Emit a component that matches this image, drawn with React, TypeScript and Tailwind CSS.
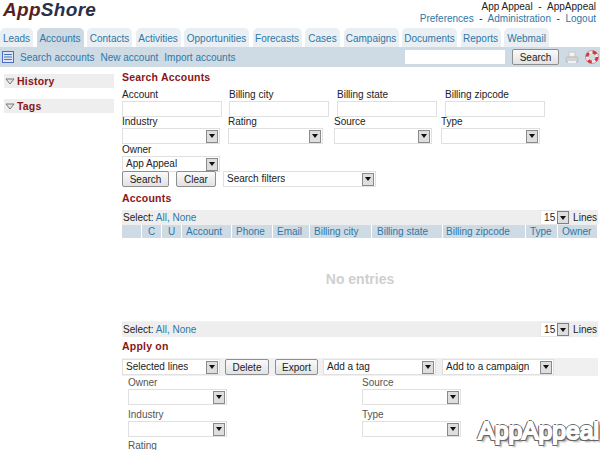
import React from "react";

function Sel({ w, text }: { w: string; text?: string }) {
  return (
    <div className={`${w} h-[16px] flex items-center justify-between bg-white border border-[#e0e0e0] pl-[3px] pr-[1px] shrink-0`}>
      <span className="truncate text-[#222] pb-[1px]">{text}</span>
      <span className="w-[12px] h-[13px] bg-[#dedede] border border-[#8a8a8a] flex items-center justify-center shrink-0">
        <svg width="6" height="4" viewBox="0 0 6 4"><path d="M0 0h6L3 4z" fill="#111" /></svg>
      </span>
    </div>
  );
}

function Btn({ w, children }: { w: string; children: React.ReactNode }) {
  return (
    <div className={`${w} h-[16px] flex items-center justify-center rounded-[2px] border border-[#8e8e8e] bg-gradient-to-b from-[#fafafa] to-[#e2e2e2] text-[#222] shrink-0`}>
      {children}
    </div>
  );
}

function Title({ children, cls }: { children: React.ReactNode; cls: string }) {
  return <div className={`font-bold text-[10.5px] tracking-[0.2px] leading-[14px] text-[#8a1616] ${cls}`}>{children}</div>;
}

function Field({ label, w }: { label: string; w: string }) {
  return (
    <div className={w}>
      <div className="leading-[13px] h-[13px] text-[#222]">{label}</div>
      <div className="w-[100px] h-[16px] bg-white border border-[#e0e0e0]" />
    </div>
  );
}

function SelField({ label, w, sel = "w-[98px]" }: { label: string; w: string; sel?: string }) {
  return (
    <div className={w}>
      <div className="leading-[13px] h-[13px] text-[#222]">{label}</div>
      <Sel w={sel} />
    </div>
  );
}

function Arrow() {
  return (
    <svg width="10" height="7" viewBox="0 0 10 7" className="shrink-0">
      <path d="M1 1h8L5 6z" fill="#e6e6e6" stroke="#777" strokeWidth="1" />
    </svg>
  );
}

function LinesBar() {
  return (
    <div className="h-[15px] bg-[#eeeeee] flex items-center justify-between pl-[1px] text-[#222]">
      <div className="pb-[1px]">
        Select: <span className="text-[#2f77a5]">All,</span> <span className="text-[#2f77a5]">None</span>
      </div>
      <div className="flex items-center">
        <div className="w-[30px] h-[15px] bg-white border border-[#e8e8e8] flex items-center justify-between pl-[3px]">
          <span>15</span>
          <span className="w-[12px] h-[13px] bg-[#dedede] border border-[#808080] flex items-center justify-center">
            <svg width="6" height="4" viewBox="0 0 6 4"><path d="M0 0h6L3 4z" fill="#111" /></svg>
          </span>
        </div>
        <span className="ml-[3px] mr-[1px]">Lines</span>
      </div>
    </div>
  );
}

const tabs: [string, string, boolean?][] = [
  ["Leads", "w-[33px]"],
  ["Accounts", "w-[47px]", true],
  ["Contacts", "w-[45px]"],
  ["Activities", "w-[45px]"],
  ["Opportunities", "w-[65px]"],
  ["Forecasts", "w-[49px]"],
  ["Cases", "w-[35px]"],
  ["Campaigns", "w-[55px]"],
  ["Documents", "w-[55px]"],
  ["Reports", "w-[40px]"],
  ["Webmail", "w-[45px]"],
];

const cols: [string, string][] = [
  ["", "w-[20px]"],
  ["C", "w-[20px] pl-[6px]"],
  ["U", "w-[20px] pl-[6px]"],
  ["Account", "w-[50px] pl-[4px]"],
  ["Phone", "w-[41px] pl-[4px]"],
  ["Email", "w-[37px] pl-[4px]"],
  ["Billing city", "w-[62px] pl-[4px]"],
  ["Billing state", "w-[71px] pl-[5px]"],
  ["Billing zipcode", "w-[83px] pl-[3px]"],
  ["Type", "w-[32px] pl-[4px]"],
  ["Owner", "w-[40px] pl-[4px]"],
];

export default function App() {
  return (
    <div className="relative w-[600px] h-[450px] overflow-hidden bg-white text-[10px] leading-[13px] text-[#222] font-['Liberation_Sans',Arial,sans-serif]">
      <div className="h-[28px] flex justify-between pl-[3px] pr-[4px]">
        <div className="text-[19px] leading-[20px] font-bold italic tracking-[0.3px] text-[#2a2f4a]">
          <span className="text-[#5a1e1e]">App</span>Shore
        </div>
        <div className="text-right leading-[12px] pt-[1px]">
          <div>App Appeal&nbsp; - &nbsp;AppAppeal</div>
          <div className="text-[#2f77a5]">
            Preferences <span className="text-[#222]">&nbsp;-&nbsp;</span> Administration <span className="text-[#222]">&nbsp;-&nbsp;</span> Logout
          </div>
        </div>
      </div>

      <div className="h-[19px] flex gap-[3.5px]">
        {tabs.map(([t, w, active]) => (
          <div
            key={t}
            className={`${w} rounded-t-[5px] flex items-center justify-center pt-[1px] text-[#2f77a5] ${active ? "bg-[#cddae3]" : "bg-[#e9eff3]"}`}
          >
            {t}
          </div>
        ))}
      </div>

      <div className="h-[20px] bg-[#cfdbe4] flex items-center pl-[2px] pr-[1px] text-[#2f77a5]">
        <svg width="12" height="12" viewBox="0 0 12 12" className="shrink-0">
          <rect x="0.5" y="0.5" width="11" height="11" fill="#dfe7f7" stroke="#4a6fc4" />
          <path d="M2 3.5h8M2 6h8M2 8.5h8" stroke="#4a6fc4" />
        </svg>
        <span className="ml-[6px]">Search accounts</span>
        <span className="ml-[6px]">New account</span>
        <span className="ml-[6px]">Import accounts</span>
        <div className="ml-auto w-[100px] h-[14px] bg-white" />
        <div className="ml-[7px]">
          <div className="w-[47px] h-[16px] flex items-center justify-center rounded-[2px] border border-[#8e8e8e] bg-gradient-to-b from-[#fafafa] to-[#e2e2e2] text-[#222]">Search</div>
        </div>
        <svg width="14" height="13" viewBox="0 0 14 13" className="ml-[6px] shrink-0">
          <rect x="4" y="1" width="6" height="5" fill="#f2f2f2" stroke="#c8c8c8" />
          <rect x="1" y="6" width="12" height="5" rx="1" fill="#d2d4d4" stroke="#bdbdbd" />
          <rect x="3" y="10" width="8" height="2" fill="#f2f2f2" />
        </svg>
        <svg width="14" height="14" viewBox="0 0 14 14" className="ml-[6px] shrink-0">
          <circle cx="7" cy="7" r="5" fill="none" stroke="#f0e8e8" strokeWidth="3" />
          <circle cx="7" cy="7" r="5" fill="none" stroke="#cf3a3e" strokeWidth="3" strokeDasharray="4 3.85" />
          <circle cx="7" cy="7" r="6.5" fill="none" stroke="#b55" strokeWidth="0.5" />
        </svg>
      </div>

      <div className="flex">
        <div className="w-[122px] shrink-0 pl-[4px] pr-[8px] pt-[7px]">
          <div className="h-[14px] bg-[#eeeeee] flex items-center pl-[1px] gap-[2px]">
            <Arrow />
            <Title cls="">History</Title>
          </div>
          <div className="h-[14px] bg-[#eeeeee] flex items-center pl-[1px] gap-[2px] mt-[11px]">
            <Arrow />
            <Title cls="">Tags</Title>
          </div>
        </div>

        <div className="w-[476px]">
          <Title cls="pt-[3px] h-[21px]">Search Accounts</Title>
          <div className="flex">
            <Field label="Account" w="w-[107px]" />
            <Field label="Billing city" w="w-[108px]" />
            <Field label="Billing state" w="w-[108px]" />
            <Field label="Billing zipcode" w="w-[108px]" />
          </div>
          <div className="flex -mt-[2px]">
            <SelField label="Industry" w="w-[106px]" />
            <SelField label="Rating" w="w-[106px]" sel="w-[95px]" />
            <SelField label="Source" w="w-[107px]" />
            <SelField label="Type" w="w-[107px]" sel="w-[99px]" />
          </div>
          <div className="-mt-[1px] h-[13px]">Owner</div>
          <Sel w="w-[98px]" text="App Appeal" />
          <div className="flex -mt-[1px] items-center h-[16px]">
            <Btn w="w-[47px]">Search</Btn>
            <div className="ml-[7px]"><Btn w="w-[40px]">Clear</Btn></div>
            <div className="ml-[7px]"><Sel w="w-[153px]" text="Search filters" /></div>
          </div>
          <Title cls="pt-[3px] h-[22px] mt-[1px]">Accounts</Title>
          <LinesBar />
          <div className="flex h-[13px]">
            {cols.map(([c, w]) => (
              <div key={c + w} className={`${w} shrink-0 bg-[#cfdbe4] border-r border-white flex items-center pb-[1px] text-[#2f77a5]`}>
                {c}
              </div>
            ))}
          </div>
          <div className="h-[84px] border-b border-[#f2f2f2] flex items-center justify-center font-bold text-[14px] text-[#cfcfcf]">
            No entries
          </div>
          <LinesBar />
          <Title cls="pt-[2px] h-[21px]">Apply on</Title>
          <div className="h-[18px] bg-[#f0f0f0] flex items-center">
            <Sel w="w-[98px]" text="Selected lines" />
            <div className="ml-[5px]"><Btn w="w-[44px]">Delete</Btn></div>
            <div className="ml-[6px]"><Btn w="w-[43px]">Export</Btn></div>
            <div className="ml-[5px]"><Sel w="w-[113px]" text="Add a tag" /></div>
            <div className="ml-[6px]"><Sel w="w-[112px]" text="Add to a campaign" /></div>
          </div>
          <div className="pl-[6px] text-[#555]">
            <div className="flex">
              <div className="w-[234px]">
                <div className="h-[13px]">Owner</div>
                <Sel w="w-[99px]" />
              </div>
              <div>
                <div className="h-[13px]">Source</div>
                <Sel w="w-[99px]" />
              </div>
            </div>
            <div className="flex mt-[3px]">
              <div className="w-[234px]">
                <div className="h-[13px]">Industry</div>
                <Sel w="w-[99px]" />
              </div>
              <div>
                <div className="h-[13px]">Type</div>
                <Sel w="w-[99px]" />
              </div>
            </div>
            <div className="mt-[2px] h-[13px]">Rating</div>
          </div>
        </div>
      </div>

      <div className="absolute right-[1px] top-[417px] text-[24.5px] leading-[28px] tracking-[0.1px] text-white [-webkit-text-stroke:2px_#ffffff] [text-shadow:2px_0_0_#666,-2px_0_0_#666,0_2px_0_#666,0_-2px_0_#666,1.5px_1.5px_0_#666,-1.5px_1.5px_0_#666,1.5px_-1.5px_0_#666,-1.5px_-1.5px_0_#666,3px_3px_2px_#999]">
        AppAppeal
      </div>
    </div>
  );
}
